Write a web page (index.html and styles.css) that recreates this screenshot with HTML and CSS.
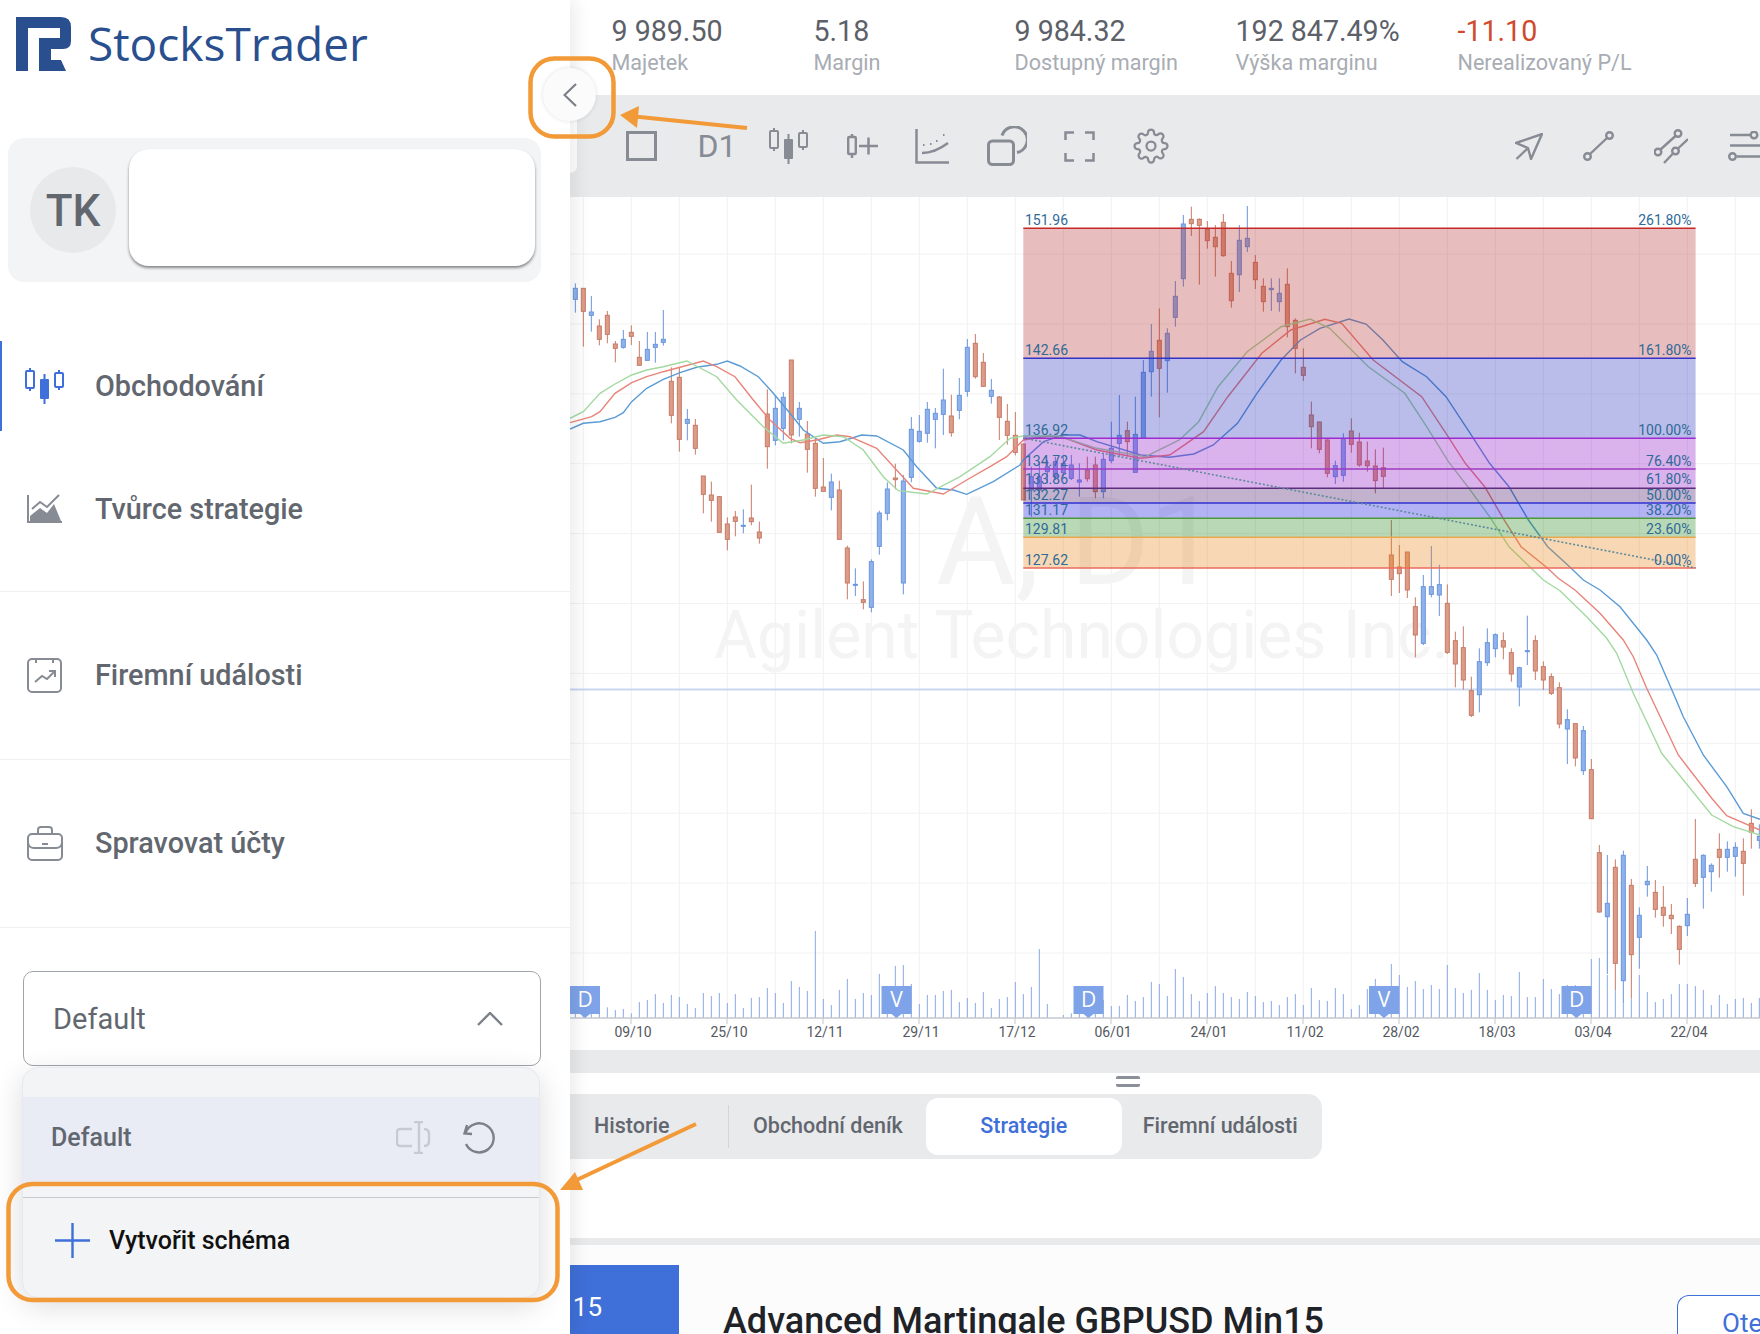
FILE: index.html
```html
<!DOCTYPE html>
<html lang="cs">

<head>
  <meta charset="UTF-8">
  <title>StocksTrader</title>
  <link rel="stylesheet" href="styles.css">
</head>

<body>
  <svg class="icon-defs" width="0" height="0">
    <symbol id="i-candles" viewBox="0 0 40 36">
      <path d="M5 0v3M5 20v3M34 2v3M34 19v3" fill="none" stroke="currentColor" stroke-width="2" />
      <rect x="1" y="3" width="8" height="17" rx="1" fill="none" stroke="currentColor" stroke-width="2" />
      <rect x="30" y="5" width="8" height="14" rx="1" fill="none" stroke="currentColor" stroke-width="2" />
      <path d="M19.5 6v5M19.5 31v5" fill="none" stroke="currentColor" stroke-width="2" />
      <rect x="15" y="11" width="9" height="20" rx="1" fill="currentColor" />
    </symbol>
  </svg>

  <div class="app">
    <aside class="sidebar">
      <div class="logo">
        <svg class="logo-mark" viewBox="0 0 55 54">
          <path d="M0 0H45Q55 0 55 10V24Q55 32 47 32H35V54H23V21H44V11H12V54H0Z" fill="#2a4f8f" />
          <path d="M35 43H45L50 54H35Z" fill="#2a4f8f" />
        </svg>
        <span class="logo-text">StocksTrader</span>
      </div>

      <div class="user-box">
        <div class="avatar">TK</div>
        <div class="user-card"></div>
      </div>

      <nav>
        <div class="nav-group nav-first">
          <div class="nav-item active">
            <svg class="nav-icon" viewBox="0 0 40 36">
              <use href="#i-candles" />
            </svg>
            <span>Obchodování</span>
          </div>
          <div class="nav-item">
            <svg class="nav-icon" viewBox="-2 -4 40 36">
              <path d="M1 0V27H35" fill="none" stroke="currentColor" stroke-width="2" />
              <path d="M5 14L13 7L20 12L32 0" fill="none" stroke="currentColor" stroke-width="2" />
              <path d="M3 26V21L13 13L20 18L27 9L34 26Z" fill="currentColor" />
            </svg>
            <span>Tvůrce strategie</span>
          </div>
        </div>
        <div class="nav-group">
          <div class="nav-item">
            <svg class="nav-icon" viewBox="-2 -1 40 36">
              <rect x="1" y="1" width="33" height="33" rx="4" fill="none" stroke="currentColor" stroke-width="2" />
              <path d="M9 1v4M26 1v4" fill="none" stroke="currentColor" stroke-width="2" />
              <path d="M8 24L15 18L20 21L28 13M22 13h6v6" fill="none" stroke="currentColor" stroke-width="2" />
            </svg>
            <span>Firemní události</span>
          </div>
        </div>
        <div class="nav-group">
          <div class="nav-item">
            <svg class="nav-icon" viewBox="-2 -1 40 36">
              <rect x="1" y="8" width="34" height="26" rx="4" fill="none" stroke="currentColor" stroke-width="2" />
              <path d="M11 8V4a3 3 0 0 1 3-3h8a3 3 0 0 1 3 3v4" fill="none" stroke="currentColor" stroke-width="2" />
              <path d="M1 16c0 4 3 6 6 6H29c3 0 6-2 6-6M15 18h6" fill="none" stroke="currentColor" stroke-width="2" />
            </svg>
            <span>Spravovat účty</span>
          </div>
        </div>
      </nav>

      <div class="scheme-select">
        <span>Default</span>
        <svg class="scheme-arrow" viewBox="0 0 26 14">
          <path d="M1 13L13 1L25 13" fill="none" stroke="currentColor" stroke-width="2.4" />
        </svg>
      </div>

      <div class="scheme-menu">
        <div class="scheme-row">
          <span>Default</span>
          <svg class="rename-icon" viewBox="0 0 35 33">
            <path d="M16 8H4a3 3 0 0 0-3 3v11a3 3 0 0 0 3 3h12M28 8c3 0 5 2 5 5v7c0 3-2 5-5 5M23 1v31M18 1h9M18 32h9"
              fill="none" stroke="currentColor" stroke-width="2.4" />
          </svg>
          <svg class="reset-icon" viewBox="0 0 35 32">
            <path d="M4.5 11A14.5 14.5 0 1 1 5 22M6 3L3.5 11.5L11 12" fill="none" stroke="currentColor"
              stroke-width="2.4" />
          </svg>
        </div>
        <div class="scheme-create">
          <svg class="plus-icon" viewBox="0 0 35 35">
            <path d="M17.5 0V35M0 17.5H35" fill="none" stroke="currentColor" stroke-width="2.4" />
          </svg>
          <span>Vytvořit schéma</span>
        </div>
      </div>
    </aside>

    <main class="main">
      <div class="stats">
        <div class="stat"><div class="stat-value">9 989.50</div><div class="stat-label">Majetek</div></div>
        <div class="stat"><div class="stat-value">5.18</div><div class="stat-label">Margin</div></div>
        <div class="stat"><div class="stat-value">9 984.32</div><div class="stat-label">Dostupný margin</div></div>
        <div class="stat"><div class="stat-value">192 847.49%</div><div class="stat-label">Výška marginu</div></div>
        <div class="stat"><div class="stat-value negative">-11.10</div><div class="stat-label">Nerealizovaný P/L</div></div>
      </div>

      <div class="toolbar">
        <div class="toolbar-tab"></div>
        <div class="tools">
          <div class="square-icon"></div>
          <span class="tf">D1</span>
          <svg class="tool-candles" viewBox="0 0 40 36">
            <use href="#i-candles" />
          </svg>
          <svg class="tool-add" viewBox="0 0 31 24">
            <path d="M5 0v3M5 20v4M12 12H31M21.5 3.5V20.5" fill="none" stroke="currentColor" stroke-width="2.5" />
            <rect x="1.2" y="3" width="7.6" height="17" rx="1" fill="none" stroke="currentColor" stroke-width="2.4" />
          </svg>
          <svg class="tool-curve" viewBox="0 0 34 35">
            <path d="M1.5 0V33.5H34" fill="none" stroke="currentColor" stroke-width="2.5" />
            <path d="M7 24C16 24 25 20 33 14" fill="none" stroke="currentColor" stroke-width="2.5" />
            <path d="M8 16h1.5M15 15h1.5M21 12h1.5M28 6h1.5" fill="none" stroke="currentColor" stroke-width="2" />
          </svg>
          <svg class="tool-shapes" viewBox="0 0 40 40">
            <rect x="1.5" y="15" width="25" height="23.5" rx="4" fill="none" stroke="currentColor" stroke-width="3" />
            <path d="M15 9.5A13 13 0 1 1 30 26.5" fill="none" stroke="currentColor" stroke-width="3" />
          </svg>
          <svg class="tool-full" viewBox="0 0 31 31">
            <path d="M1.5 9V1.5H10M21 1.5H29.5V9M1.5 22V29.5H10M21 29.5H29.5V22" fill="none" stroke="currentColor"
              stroke-width="2.5" />
          </svg>
          <svg class="tool-gear" viewBox="0 0 24 24">
            <circle cx="12" cy="12" r="3" fill="none" stroke="currentColor" stroke-width="1.5" />
            <path fill="none" stroke="currentColor" stroke-width="1.5"
              d="M19.4 15a1.65 1.65 0 0 0 .33 1.82l.06.06a2 2 0 0 1 0 2.83 2 2 0 0 1-2.83 0l-.06-.06a1.65 1.65 0 0 0-1.82-.33 1.65 1.65 0 0 0-1 1.51V21a2 2 0 0 1-2 2 2 2 0 0 1-2-2v-.09A1.65 1.65 0 0 0 9 19.4a1.65 1.65 0 0 0-1.82.33l-.06.06a2 2 0 0 1-2.83 0 2 2 0 0 1 0-2.83l.06-.06a1.65 1.65 0 0 0 .33-1.82 1.65 1.65 0 0 0-1.51-1H3a2 2 0 0 1-2-2 2 2 0 0 1 2-2h.09A1.65 1.65 0 0 0 4.6 9a1.65 1.65 0 0 0-.33-1.82l-.06-.06a2 2 0 0 1 0-2.83 2 2 0 0 1 2.83 0l.06.06a1.65 1.65 0 0 0 1.82.33H9a1.65 1.65 0 0 0 1-1.51V3a2 2 0 0 1 2-2 2 2 0 0 1 2 2v.09a1.65 1.65 0 0 0 1 1.51 1.65 1.65 0 0 0 1.82-.33l.06-.06a2 2 0 0 1 2.83 0 2 2 0 0 1 0 2.83l-.06.06a1.65 1.65 0 0 0-.33 1.82V9a1.65 1.65 0 0 0 1.51 1H21a2 2 0 0 1 2 2 2 2 0 0 1-2 2h-.09a1.65 1.65 0 0 0-1.51 1z" />
          </svg>
        </div>
        <div class="tools tools-right">
          <svg class="tool-cursor" viewBox="0 0 28 27">
            <path d="M27 1L1 10L13 15L16 26ZM1.5 26L12 16" fill="none" stroke="currentColor" stroke-width="2.4"
              stroke-linejoin="round" />
          </svg>
          <svg class="tool-line" viewBox="0 0 31 30">
            <circle cx="4.5" cy="25.5" r="3.3" fill="none" stroke="currentColor" stroke-width="2.4" />
            <circle cx="26.5" cy="4.5" r="3.3" fill="none" stroke="currentColor" stroke-width="2.4" />
            <path d="M7 23L24 7" fill="none" stroke="currentColor" stroke-width="2.4" />
          </svg>
          <svg class="tool-lines" viewBox="0 0 34 35">
            <circle cx="4" cy="23" r="3.3" fill="none" stroke="currentColor" stroke-width="2.4" />
            <circle cx="24" cy="4.5" r="3.3" fill="none" stroke="currentColor" stroke-width="2.4" />
            <circle cx="21.5" cy="22" r="3.3" fill="none" stroke="currentColor" stroke-width="2.4" />
            <path d="M6.5 20.5L21.5 7M34 10L24 19.5M19 24.5L10 34" fill="none" stroke="currentColor" stroke-width="2.4" />
          </svg>
          <svg class="tool-settings" viewBox="0 0 32 30">
            <path d="M2 4H22M2 14.5H32M9 25.5H32" fill="none" stroke="currentColor" stroke-width="2.4" />
            <circle cx="26" cy="4" r="3.3" fill="none" stroke="currentColor" stroke-width="2.4" />
            <circle cx="4.5" cy="25.5" r="3.3" fill="none" stroke="currentColor" stroke-width="2.4" />
          </svg>
        </div>
      </div>

      <svg id="chart" class="chart" viewBox="570 197 1190 853"></svg>

      <div class="band"></div>
      <div class="handle"><span></span></div>

      <div class="tabs">
        <div class="tab tab-history">Historie</div>
        <div class="tab-sep"></div>
        <div class="tab">Obchodní deník</div>
        <div class="tab tab-active">Strategie</div>
        <div class="tab tab-last">Firemní události</div>
      </div>

      <div class="tabs-space"></div>
      <div class="band band-thin"></div>

      <div class="card">
        <div class="card-badge">15</div>
        <div class="card-title">Advanced Martingale GBPUSD Min15</div>
        <div class="card-button">Ote</div>
      </div>
    </main>

    <button class="collapse">
      <svg viewBox="0 0 14 24">
        <path d="M13 1L1.5 12L13 23" fill="none" stroke="currentColor" stroke-width="2.2" />
      </svg>
    </button>

    <!-- orange notes drawn over the screenshot -->
    <svg class="notes" viewBox="0 0 1760 1334">
      <rect x="530.5" y="58.500" width="83" height="78" rx="24" fill="none" stroke="#f29a38" stroke-width="4.5" />
      <path d="M747 128L630 116" fill="none" stroke="#f29a38" stroke-width="4" />
      <path d="M620 115L639 106L637 128Z" fill="#f29a38" />
      <rect x="8.5" y="1184" width="549" height="116" rx="24" fill="none" stroke="#f29a38" stroke-width="4.5" />
      <path d="M696 1124L568 1184" fill="none" stroke="#f29a38" stroke-width="4" />
      <path d="M560 1190L575 1172L583 1190Z" fill="#f29a38" />
    </svg>
  </div>

  <script src="chart.js"></script>
</body>

</html>
```

FILE: styles.css
```css
* {
  box-sizing: border-box;
}

body {
  margin: 0;
  font-family: Roboto, sans-serif;
  background: #fff;
  color: #62676f;
  overflow: hidden;
}

.icon-defs {
  position: absolute;
}

.app {
  position: relative;
  display: flex;
  width: 1760px;
  height: 1334px;
  overflow: hidden;
}

/* sidebar */

.sidebar {
  position: relative;
  z-index: 2;
  flex: none;
  width: 570px;
  background: #fff;
  box-shadow: 4px 0 18px rgba(0, 0, 0, .09);
}

.logo {
  display: flex;
  align-items: center;
  height: 138px;
  padding: 0 0 50px 16px;
}

.logo-mark {
  width: 55px;
  height: 54px;
}

.logo-text {
  margin: -2px 0 0 17px;
  font-family: "Open Sans", sans-serif;
  font-size: 46px;
  color: #2a4f8f;
}

.user-box {
  display: flex;
  align-items: center;
  width: 533px;
  height: 144px;
  margin-left: 8px;
  padding: 0 6px 0 22px;
  background: #f3f4f6;
  border-radius: 16px;
}

.avatar {
  display: flex;
  flex: none;
  align-items: center;
  justify-content: center;
  width: 86px;
  height: 86px;
  padding-top: 2px;
  border-radius: 50%;
  background: #e8e9eb;
  font-size: 44px;
  font-weight: 500;
}

.user-card {
  flex: 1;
  height: 117px;
  margin-left: 13px;
  margin-top: -5px;
  background: #fff;
  border-radius: 20px;
  box-shadow: 0 2px 3px rgba(0, 0, 0, .45);
}

.nav-group {
  padding: 38px 0 39px;
  border-bottom: 1px solid #eeeff1;
}

.nav-first {
  padding: 59px 0 37px;
}

.nav-item {
  display: flex;
  align-items: center;
  height: 90px;
  padding-left: 25px;
  font-size: 28.8px;
  font-weight: 500;
}

.nav-item + .nav-item {
  margin-top: 33px;
}

.nav-item.active {
  border-left: 2px solid #3f6fd8;
  padding-left: 23px;
}

.nav-item.active .nav-icon {
  color: #3f6fd8;
}

.nav-icon {
  flex: none;
  width: 40px;
  height: 36px;
  margin-right: 30px;
  color: #868b94;
}

.scheme-select {
  display: flex;
  align-items: center;
  justify-content: space-between;
  width: 518px;
  height: 95px;
  margin: 43px 0 0 23px;
  padding: 0 37px 0 29px;
  border: 1px solid #a0a4ab;
  border-radius: 10px;
  font-size: 29px;
}

.scheme-arrow {
  width: 26px;
  height: 14px;
  color: #7b8089;
}

.scheme-menu {
  width: 518px;
  height: 231px;
  margin: 1px 0 0 22px;
  padding-top: 29px;
  background: #f3f4f6;
  border: 1px solid #e8e9ec;
  border-radius: 16px;
  box-shadow: 0 8px 30px rgba(0, 0, 0, .14);
}

.scheme-row {
  display: flex;
  align-items: center;
  height: 88px;
  padding: 0 43px 7px 28px;
  background: #e9ecf5;
  font-size: 25px;
  font-weight: 500;
}

.scheme-row span {
  flex: 1;
}

.rename-icon {
  width: 35px;
  height: 33px;
  color: #c7cad1;
}

.reset-icon {
  width: 35px;
  height: 32px;
  margin-left: 30px;
  color: #7b8089;
}

.scheme-create {
  display: flex;
  align-items: center;
  height: 85px;
  margin-top: 12px;
  padding-left: 32px;
  border-top: 1px solid #c8cad0;
  font-size: 25px;
  font-weight: 500;
  color: #111;
}

.plus-icon {
  width: 35px;
  height: 35px;
  margin-right: 19px;
  color: #3f6fd8;
}

/* main column */

.main {
  display: flex;
  flex: none;
  flex-direction: column;
  width: 1190px;
  height: 1334px;
  overflow: hidden;
}

.stats {
  display: grid;
  grid-template-columns: 202px 201px 221px 222px auto;
  flex: none;
  height: 95px;
  padding: 14px 0 0 41.5px;
}

.stat-value {
  font-size: 28.6px;
  line-height: 34px;
  color: #5c6068;
}

.stat-value.negative {
  color: #d0492b;
}

.stat-label {
  font-size: 21.6px;
  line-height: 29px;
  color: #a8acb3;
}

.toolbar {
  position: relative;
  display: flex;
  flex: none;
  align-items: center;
  justify-content: space-between;
  height: 102px;
  padding-left: 56px;
  background: #e9eaec;
  color: #868b94;
}

.toolbar-tab {
  position: absolute;
  left: 0;
  top: 0;
  width: 7px;
  height: 78px;
  background: #fff;
  border-bottom-right-radius: 8px;
}

.tools {
  display: flex;
  align-items: center;
  gap: 37.5px;
}

.tools-right {
  gap: 40px;
}

.square-icon {
  width: 31px;
  height: 30px;
  border: 3px solid #868b94;
}

.tf {
  width: 34px;
  margin-left: 3px;
  font-size: 32px;
  line-height: 34px;
  white-space: nowrap;
}

.tool-candles { width: 40px; height: 36px; }
.tool-add { width: 31px; height: 24px; }
.tool-curve { width: 34px; height: 35px; }
.tool-shapes { width: 40px; height: 40px; }
.tool-full { width: 31px; height: 31px; }
.tool-gear { width: 36px; height: 36px; }
.tool-cursor { width: 28px; height: 27px; }
.tool-line { width: 31px; height: 30px; }
.tool-lines { width: 34px; height: 35px; }
.tool-settings { width: 32px; height: 30px; }

.chart {
  display: block;
  flex: none;
  width: 1190px;
  height: 853px;
  background: #fff;
  font-family: Roboto, sans-serif;
}

.band {
  flex: none;
  height: 23px;
  background: #e9eaec;
}

.band-thin {
  height: 7px;
}

.handle {
  display: flex;
  flex: none;
  justify-content: center;
  height: 21px;
  padding: 3px 74px 0 0;
}

.handle span {
  width: 24px;
  height: 11px;
  border-top: 3px solid #8a8f98;
  border-bottom: 3px solid #8a8f98;
  border-radius: 2px;
}

.tabs {
  display: flex;
  flex: none;
  align-items: center;
  width: 752px;
  height: 65px;
  background: #e9eaec;
  border-radius: 0 14px 14px 0;
  font-size: 21.5px;
  font-weight: 500;
}

.tab {
  padding: 0 23px 2px 24px;
}

.tab-history {
  width: 158px;
}

.tab-sep {
  width: 1px;
  height: 43px;
  background: #d3d5d9;
}

.tab-active {
  width: 196px;
  height: 57px;
  padding: 0;
  line-height: 55px;
  text-align: center;
  background: #fff;
  border-radius: 12px;
  color: #3f6fd8;
}

.tab-last {
  padding-left: 21px;
}

.tabs-space {
  flex: none;
  height: 79px;
}

.card {
  display: flex;
  flex: 1;
  padding-top: 20px;
  background: #fcfcfc;
  overflow: hidden;
}

.card-badge {
  flex: none;
  width: 109px;
  padding: 27px 77px 0 0;
  background: #3f6fd8;
  color: #fff;
  font-size: 26px;
  line-height: 30px;
  text-align: right;
}

.card-title {
  margin: 36px 0 0 44px;
  font-size: 36px;
  line-height: 40px;
  font-weight: 500;
  color: #1f2328;
  white-space: nowrap;
}

.card-button {
  flex: none;
  width: 83px;
  height: 60px;
  margin: 30px 0 0 auto;
  padding: 12px 0 0 44px;
  border: 1px solid #3f6fd8;
  border-right: none;
  border-radius: 12px 0 0 12px;
  background: #fff;
  color: #3f6fd8;
  font-size: 26px;
}

.collapse {
  position: absolute;
  z-index: 3;
  left: 543px;
  top: 68px;
  width: 53px;
  height: 53px;
  padding: 0;
  border: none;
  border-radius: 50%;
  background: #fbfbfb;
  box-shadow: 0 0 4px rgba(0, 0, 0, .12);
  color: #7b8089;
}

.collapse svg {
  display: block;
  width: 14px;
  height: 24px;
  margin: auto;
}

.notes {
  position: absolute;
  z-index: 4;
  left: 0;
  top: 0;
  width: 1760px;
  height: 1334px;
  pointer-events: none;
}
```

FILE: chart.js
```js
const chart = document.getElementById("chart");

const AXIS_Y = 1018;
const candleX = (k) => 575.33 + 8 * k;

// b = up, r = down: [colour, bodyTop, bodyBottom, wickTop, wickBottom]
// values are in three runs, each with its own y origin, scale 1/3 px
const candleRuns = [
  { origin: 260, first: 0, rows: [
    "b 85 118 70 158", "r 85 154 85 260", "b 156 166 108 215", "r 198 238 178 256", "r 166 223 153 250",
    "r 252 265 243 307", "b 238 262 210 266", "r 217 229 196 255", "r 292 316 243 316", "b 268 301 216 301",
    "b 253 262 216 308", "b 238 247 150 257", "r 364 466 322 490", "r 352 538 322 575", "b 478 490 447 541",
    "r 496 565 477 584", "r 648 703 648 760", "r 705 721 665 785", "r 710 817 708 817", "r 792 838 772 871",
    "r 771 784 753 829", "b 796 798 748 820", "r 774 785 674 796", "r 816 834 785 851", "r 462 560 388 626",
    "b 445 541 405 556", "b 412 505 396 541", "r 300 525 300 550", "b 445 478 426 530", "r 522 568 483 638",
    "r 550 685 535 710", "r 681 694 594 694", "b 666 712 641 751", "r 690 838 662 838", "r 864 969 857 1018",
    "b 973 976 925 1008", "r 1019 1027 964 1048", "b 905 1042 898 1057", "b 759 859 752 884", "b 687 760 667 781",
    "r 654 659 611 688", "b 663 969 645 1003", "b 508 652 471 667", "b 514 544 465 548", "b 448 520 426 548",
    "b 460 478 444 565", "b 420 463 326 525", "r 468 518 404 530", "b 406 451 354 478", "b 262 394 237 410",
    "r 250 350 222 356", "r 307 379 279 380", "b 391 409 357 431", "r 411 472 408 540", "r 484 526 432 554",
    "r 526 577 456 586", "r 552 720 552 720",
  ] },
  { origin: 200, first: 57, rows: [
    "b 830 870 800 950", "b 830 870 785 890", "b 800 815 780 850", "b 785 830 770 840", "b 790 818 770 830",
    "b 795 835 765 840", "b 840 846 790 890", "r 810 836 770 845", "r 795 875 770 895", "b 778 875 760 895",
    "b 745 782 665 790", "b 706 730 585 770", "r 692 725 665 770", "b 703 817 590 817", "b 517 715 480 715",
    "b 454 515 372 590", "r 421 505 325 652", "b 400 482 385 578", "b 289 352 243 380", "b 72 236 45 260",
    "r 58 71 20 108", "r 58 76 55 254", "r 88 122 63 146", "r 112 140 75 230", "r 67 167 42 170",
    "r 220 302 183 323", "b 121 224 75 276", "b 115 140 18 156", "r 187 239 165 267", "r 259 305 235 335",
    "b 265 269 235 333", "b 280 305 235 335", "r 253 380 205 412", "r 361 445 355 520", "r 502 526 445 543",
    "r 645 680 605 745", "r 666 748 665 760", "r 720 820 718 832", "b 797 830 782 852", "b 716 826 700 845",
    "r 693 733 655 758", "r 726 795 698 800", "r 783 797 725 815", "r 798 842 748 880", "r 803 829 743 865",
    "r 1065 1138 960 1188", "r 1101 1121 1035 1179", "r 1056 1170 1056 1194",
  ] },
  { origin: 560, first: 105, rows: [
    "r 140 225 112 292", "b 80 250 45 255", "b 80 103 -42 112", "b 74 105 14 168", "r 130 277 73 282",
    "r 242 312 215 382", "r 263 360 199 389", "r 392 466 350 471", "b 305 404 265 457", "b 248 308 205 318",
    "b 224 266 220 292", "r 242 261 217 298", "r 278 342 265 365", "b 323 381 320 439", "b 272 275 167 315",
    "r 242 333 226 360", "r 320 360 304 390", "r 350 400 340 405", "r 383 492 367 505", "b 479 507 448 612",
    "r 491 594 491 619", "b 512 632 498 645", "r 629 776 597 776", "r 878 1056 855 1058", "b 1030 1070 885 1242",
    "r 922 1210 898 1290", "b 886 1262 872 1330", "r 976 1184 957 1315", "b 1066 1132 1042 1226", "b 964 974 918 1010",
    "r 997 1048 960 1073", "r 1042 1066 978 1100", "r 1066 1076 1032 1122", "r 1099 1168 1096 1214", "b 1063 1097 1014 1128",
    "r 898 970 777 981", "b 886 952 883 1046", "b 916 935 910 995", "r 868 892 820 953", "b 868 892 844 935",
    "b 862 889 847 950", "r 874 910 835 1007", "r 790 817 748 866", "b 829 841 793 866",
  ] },
];

// bar tops in two runs, same idea as the candles
const volumeTops = [
  300, 280, 315, 340, 322, 330, 327, 340, 306, 300, 282, 309, 285, 291, 312, 324, 279, 288, 279, 309, 282, 324, 294,
  291, 264, 279, 309, 243, 261, 273, 93, 297, 315, 270, 237, 297, 279, 285, 222, 267, 198, 195, 252, 312, 285, 285,
  273, 270, 306, 294, 309, 276, 324, 297, 291, 246, 282, 261, 147, 312, 355, 345, 340, 322, 300, 324, 300, 318, 318,
  285, 303, 291, 246, 252, 288, 207, 231, 282, 303, 279, 258, 279, 291, 297, 276,
].map((top) => 900 + top / 3);

const volumeTops2 = [
  1308, 1326, 1323, 1335, 1311, 1302, 1335, 1284, 1320, 1323, 1284, 1302, 1347, 1335, 1287, 1257, 1280, 1212, 1245,
  1281, 1263, 1287, 1275, 1287, 1215, 1284, 1299, 1290, 1239, 1290, 1320, 1305, 1308, 1236, 1311, 1311, 1257, 1287,
  1302, 1275, 1275, 1290, 1197, 1194, 1245, 1290, 1330, 1315, 1245, 1296, 1326, 1317, 1302, 1272, 1272, 1278, 1290,
  1335, 1305, 1332, 1317, 1314, 1329, 1314,
].map((top) => 560 + top / 3);

// moving averages, read from the picture in three pieces
const averages = [
  {
    color: "#5b9bd5",
    a: [[0,507],[40,490],[90,485],[135,472],[160,458],[185,425],[230,385],[280,358],[330,338],[380,322],[440,313],[472,303],[510,318],[565,350],[610,400],[660,460],[700,510],[760,550],[810,545],[875,525],[920,528],[1000,570],[1040,620],[1100,685],[1150,690],[1190,703],[1270,665],[1350,615]],
    b: [[48,780],[90,725],[130,705],[165,705],[200,725],[290,765],[350,772],[400,762],[440,735],[490,670],[530,580],[580,480],[620,420],[660,385],[720,357],[755,372],[790,420],[830,485],[880,530],[920,590],[970,700],[1010,790],[1050,860],[1090,960],[1130,1040],[1175,1100]],
    c: [[1000,60],[1050,90],[1110,140],[1190,240],[1220,285],[1270,400],[1300,470],[1360,585],[1430,680],[1480,760],[1530,778]],
  },
  {
    color: "#e8847a",
    a: [[0,488],[65,470],[90,455],[135,400],[185,368],[230,350],[280,335],[330,322],[400,303],[440,320],[495,350],[550,420],[600,480],[660,535],[690,548],[740,540],[800,525],[840,530],[920,565],[975,625],[1030,685],[1070,692],[1120,702],[1190,660],[1260,620],[1310,590],[1360,540]],
    b: [[100,708],[130,712],[200,750],[290,775],[350,765],[420,695],[470,590],[540,460],[600,390],[670,358],[705,370],[770,480],[870,590],[920,700],[960,790],[1000,860],[1040,960],[1075,1040],[1130,1105]],
    c: [[925,55],[975,90],[1050,160],[1120,240],[1150,290],[1190,385],[1285,585],[1385,715],[1430,767],[1530,810]],
  },
  {
    color: "#a3d9a0",
    a: [[0,475],[40,455],[90,400],[135,372],[185,345],[230,330],[280,320],[350,303],[440,350],[500,420],[580,500],[640,550],[700,540],[760,525],[820,530],[880,570],[940,650],[985,692],[1070,702],[1170,650],[1260,590],[1320,535],[1360,528]],
    b: [[120,708],[200,745],[300,770],[370,720],[410,665],[450,560],[510,455],[580,380],[640,357],[680,385],[760,500],[835,580],[880,680],[925,785],[965,860],[1010,950],[1050,1040]],
    c: [[880,60],[930,92],[1010,170],[1070,235],[1100,280],[1150,400],[1235,580],[1385,765],[1450,800],[1530,825]],
  },
];

const FIB_LEFT = 1023.3;
const FIB_RIGHT = 1695.6;

const fibZones = [
  { top: 228.3, bottom: 358.3, fill: "rgba(178,38,38,.3)" },
  { top: 358.3, bottom: 438.3, fill: "rgba(25,32,182,.3)" },
  { top: 438.3, bottom: 488.3, fill: "rgba(132,0,192,.3)" },
  { top: 488.3, bottom: 503, fill: "rgba(52,0,92,.3)" },
  { top: 503, bottom: 518.3, fill: "rgba(0,0,222,.3)" },
  { top: 518.3, bottom: 537.3, fill: "rgba(22,125,12,.3)" },
  { top: 537.3, bottom: 568, fill: "rgba(232,125,5,.3)" },
];

const fibLines = [
  { y: 228.3, color: "#c62828" }, { y: 358.3, color: "#3333c8" }, { y: 438.3, color: "#9c2bd0" },
  { y: 469, color: "#9c3bc0" }, { y: 488.3, color: "#5e2d80" }, { y: 503, color: "#3030d0" },
  { y: 518.3, color: "#4c9a3c" }, { y: 537.3, color: "#e8a850" }, { y: 568, color: "#ec6a5e" },
];

const fibLabels = [
  ["151.96", "261.80%", 225], ["142.66", "161.80%", 355], ["136.92", "100.00%", 435],
  ["134.72", "76.40%", 466], ["133.86", "61.80%", 484], ["132.27", "50.00%", 500],
  ["131.17", "38.20%", 515], ["129.81", "23.60%", 534], ["127.62", "0.00%", 565],
];

const dates = ["09/10", "25/10", "12/11", "29/11", "17/12", "06/01", "24/01", "11/02", "28/02", "18/03", "03/04", "22/04"];

const markers = [
  { x: 570, letter: "D" }, { x: 881.5, letter: "V" }, { x: 1073.5, letter: "D" },
  { x: 1369, letter: "V" }, { x: 1561.5, letter: "D" },
];

let svg = "";

function line(x1, y1, x2, y2, color, width) {
  svg += `<line x1="${x1}" y1="${y1}" x2="${x2}" y2="${y2}" stroke="${color}" stroke-width="${width}"/>`;
}

function text(x, y, value, attrs) {
  svg += `<text x="${x}" y="${y}" ${attrs}>${value}</text>`;
}

// grid
for (let x = 583.3; x < 1760; x += 48) {
  line(x, 197, x, AXIS_Y, "#f1f1f2", 1);
}
for (let y = 254; y < AXIS_Y; y += 69.9) {
  line(570, y, 1760, y, "#f2f2f3", 1);
}

// watermark
text(936, 584, "A, D1", 'font-size="122" fill="#f4f4f4"');
text(714, 658, "Agilent Technologies Inc.", 'font-size="66" fill="#f4f4f4"');

line(570, 689.5, 1760, 689.5, "#c8d8f0", 2);

// volume
const drawVolume = (tops, first) => {
  tops.forEach((top, i) => {
    line(candleX(first + i), top, candleX(first + i), AXIS_Y, "#8aa9e6", 1);
  });
};
drawVolume(volumeTops, 0);
drawVolume(volumeTops2, 85);

// candles
candleRuns.forEach((run) => {
  run.rows.forEach((row, i) => {
    const [kind, ...rest] = row.split(" ");
    const [bodyTop, bodyBottom, wickTop, wickBottom] = rest.map((v) => run.origin + v / 3);
    const x = candleX(run.first + i);
    const wick = kind === "b" ? "#6a94dc" : "#c47a66";
    const fill = kind === "b" ? "#8fb2ec" : "#de9c88";
    line(x, wickTop, x, wickBottom, wick, 1);
    svg += `<rect x="${x - 2}" y="${bodyTop}" width="4" height="${Math.max(bodyBottom - bodyTop, 1)}" fill="${fill}" stroke="${wick}" stroke-width="1"/>`;
  });
});

// moving averages
averages.forEach((avg) => {
  const pts = [
    ...avg.a.map(([x, y]) => [570 + x / 3, 260 + y / 3]),
    ...avg.b.map(([x, y]) => [1000 + x / 2.063, 200 + y / 3]),
    ...avg.c.map(([x, y]) => [1250 + x / 3, 560 + y / 3]),
  ];
  const points = pts.map((p) => p.map((v) => v.toFixed(1)).join(",")).join(" ");
  svg += `<polyline points="${points}" fill="none" stroke="${avg.color}" stroke-width="1.4"/>`;
});

// fibonacci levels
fibZones.forEach((zone) => {
  svg += `<rect x="${FIB_LEFT}" y="${zone.top}" width="${FIB_RIGHT - FIB_LEFT}" height="${zone.bottom - zone.top}" fill="${zone.fill}"/>`;
});
fibLines.forEach((fib) => line(FIB_LEFT, fib.y, FIB_RIGHT, fib.y, fib.color, 1.4));

svg += `<line x1="${FIB_LEFT}" y1="438" x2="${FIB_RIGHT}" y2="568" stroke="#5d8a9a" stroke-width="1.6" stroke-dasharray="2 2"/>`;

fibLabels.forEach(([price, percent, y]) => {
  text(1025, y, price, 'font-size="14" fill="#2f6a98"');
  text(1691.5, y, percent, 'font-size="14" fill="#2f6a98" text-anchor="end"');
});

// time axis
line(570, AXIS_Y, 1760, AXIS_Y, "#c5c8d0", 1.4);
dates.forEach((date, i) => {
  const x = 631 + 96 * i;
  line(x, AXIS_Y, x, 1024, "#c5c8d0", 1);
  text(x + 2, 1037, date, 'font-size="14" fill="#55595f" text-anchor="middle"');
});

markers.forEach((m) => {
  svg += `<path d="M${m.x} 986h30v28h-10l-5 4l-5-4h-10z" fill="#7ea3e8"/>`;
  text(m.x + 15, 1007, m.letter, 'font-family="Open Sans" font-size="21" fill="#fff" text-anchor="middle"');
});

chart.innerHTML = svg;
```
